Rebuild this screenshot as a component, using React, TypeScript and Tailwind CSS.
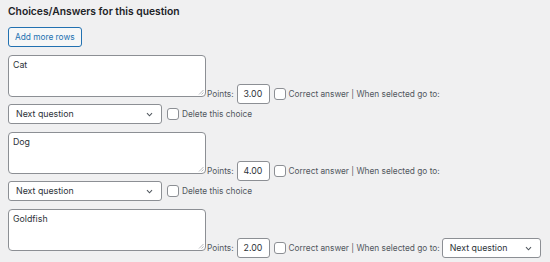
import React from "react";

const font = { fontFamily: "Inter, 'Noto Sans', sans-serif" };

function Chevron() {
  return (
    <svg width="9" height="9" viewBox="0 0 10 10" className="text-[#50575e]">
      <path d="M2.2 3.6 L5 6.4 L7.8 3.6" fill="none" stroke="currentColor" strokeWidth="1.2" />
    </svg>
  );
}

function Select({ w }: { w: string }) {
  return (
    <div className={`${w} h-[20px] bg-white border border-[#8c8f94] rounded-[3px] flex items-center justify-between pl-[7px] pr-[7px] text-[8.8px] text-[#2c3338] shrink-0`}>
      <span>Next question</span>
      <Chevron />
    </div>
  );
}

function Checkbox() {
  return <div className="w-[12px] h-[12px] bg-white border border-[#8c8f94] rounded-[3px] shrink-0" />;
}

function Textarea({ text }: { text: string }) {
  return (
    <div className="relative w-[198px] h-[42px] bg-white border border-[#8c8f94] rounded-[4px] px-[4px] pt-[3px] text-[8.8px] leading-[12px] text-[#2c3338] shrink-0">
      {text}
      <svg className="absolute right-[1px] bottom-[1px]" width="6" height="6" viewBox="0 0 6 6">
        <path d="M5.5 1 L1 5.5 M5.5 3.5 L3.5 5.5" stroke="#a7aaad" strokeWidth="0.8" />
      </svg>
    </div>
  );
}

function Points({ value, withSelect }: { value: string; withSelect?: boolean }) {
  return (
    <div className="flex items-center mt-[29px] ml-[1px] text-[8.3px] text-[#50575e] h-[20px] whitespace-nowrap">
      <span className="mr-[3px]">Points:</span>
      <div className="w-[33px] h-[20px] bg-white border border-[#8c8f94] rounded-[3px] flex items-center pl-[6px] text-[8.8px] text-[#2c3338] shrink-0">{value}</div>
      <div className="ml-[4px] mr-[3px]"><Checkbox /></div>
      <span>Correct answer | When selected go to:</span>
      {withSelect && <div className="ml-[2px]"><Select w="w-[99px]" /></div>}
    </div>
  );
}

function Choice({ text, value, last }: { text: string; value: string; last?: boolean }) {
  return (
    <div className="flex flex-col">
      <div className="flex items-start">
        <Textarea text={text} />
        <Points value={value} withSelect={last} />
      </div>
      {!last && (
        <div className="flex items-center mb-[8px]">
          <Select w="w-[154px]" />
          <div className="ml-[5px] mr-[3px]"><Checkbox /></div>
          <span className="text-[8.3px] text-[#50575e]">Delete this choice</span>
        </div>
      )}
    </div>
  );
}

export default function App() {
  return (
    <div className="w-[550px] h-[262px] bg-[#f0f0f1] pl-[8px] pt-[1px] overflow-hidden" style={font}>
      <div className="text-[10.3px] font-semibold text-[#1d2327] h-[20px] leading-[20px]">Choices/Answers for this question</div>
      <div className="mt-[6px] mb-[8px] inline-flex items-center h-[20px] px-[6px] border border-[#2271b1] rounded-[3px] bg-[#f6f7f7] text-[8.3px] text-[#2271b1]">Add more rows</div>
      <Choice text="Cat" value="3.00" />
      <Choice text="Dog" value="4.00" />
      <Choice text="Goldfish" value="2.00" last />
    </div>
  );
}
